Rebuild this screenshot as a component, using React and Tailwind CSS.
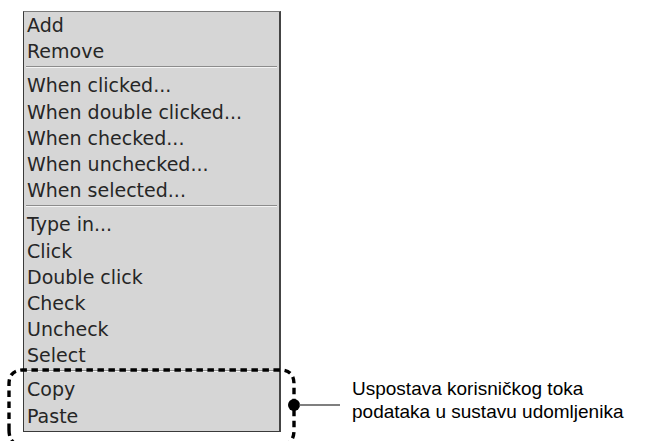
import React from "react";

const groups = [
  ["Add", "Remove"],
  ["When clicked...", "When double clicked...", "When checked...", "When unchecked...", "When selected..."],
  ["Type in...", "Click", "Double click", "Check", "Uncheck", "Select"],
  ["Copy", "Paste"],
];

function Separator() {
  return (
    <div className="h-[8px] pt-[2px] px-[2px]">
      <div className="h-[2px] border-t border-[#8c8c8c] border-b border-b-[#f4f4f4]" />
    </div>
  );
}

function App() {
  return (
    <div className="relative w-[660px] h-[441px] bg-white overflow-hidden">
      <div className="flex pt-[11px] pl-[23px]">
        <div className="w-[258px] bg-[#d6d6d6] border-t border-l border-r-2 border-b border-t-[#7a7a7a] border-l-[#3a3a3a] border-r-[#444] border-b-[#3a3a3a] pb-[2px] text-[#262626] font-['DejaVu_Sans',sans-serif]">
          {groups.map((items, gi) => (
            <div key={gi}>
              {gi > 0 && <Separator />}
              {items.map((item) => (
                <div key={item} className="h-[26.2px] leading-[26.2px] pl-[3px] text-[19px] whitespace-nowrap">
                  {item}
                </div>
              ))}
            </div>
          ))}
        </div>
      </div>

      <svg className="absolute left-0 top-0" width="660" height="441">
        <path
          d="M9 430 L9 384 Q9 370 23 370 L280 370 Q294 370 294 384 L294 430 Q294 446 278 446 L25 446 Q9 446 9 430 Z"
          fill="none"
          stroke="#000"
          strokeWidth="3.4"
          strokeDasharray="6.5 4.5"
        />
        <circle cx="294" cy="405" r="6" fill="#000" />
        <line x1="299" y1="405" x2="340" y2="405" stroke="#555" strokeWidth="1.3" />
      </svg>

      <div className="absolute left-[352px] top-[377px] text-[19px] leading-[23px] text-black font-['Liberation_Sans',Arial,sans-serif]">
        <div>Uspostava korisničkog toka</div>
        <div>podataka u sustavu udomljenika</div>
      </div>
    </div>
  );
}

export default App;
